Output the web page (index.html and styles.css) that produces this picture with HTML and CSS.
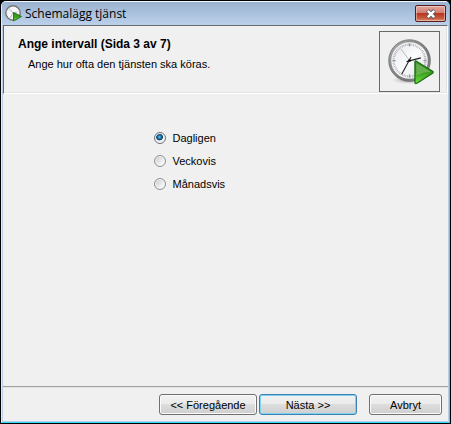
FILE: index.html
```html
<!DOCTYPE html>
<html lang="sv">
<head>
<meta charset="utf-8">
<title>Schemalägg tjänst</title>
<link rel="stylesheet" href="styles.css">
</head>
<body>
<svg class="defs" width="0" height="0" aria-hidden="true">
  <defs>
    <linearGradient id="rim" x1="0" y1="0" x2="1" y2="1">
      <stop offset="0" stop-color="#aaa"/><stop offset=".4" stop-color="#888"/><stop offset=".7" stop-color="#777"/><stop offset="1" stop-color="#999"/>
    </linearGradient>
    <linearGradient id="face" x1="0" y1="0" x2="1" y2="1">
      <stop offset="0" stop-color="#e2e4e8"/><stop offset=".5" stop-color="#fafbfc"/><stop offset="1" stop-color="#d9dce2"/>
    </linearGradient>
    <linearGradient id="play" x1="0" y1="0" x2="0" y2="1">
      <stop offset="0" stop-color="#3f8f2c"/><stop offset=".5" stop-color="#3a9a20"/><stop offset="1" stop-color="#6ee33c"/>
    </linearGradient>
    <radialGradient id="shade">
      <stop offset="0" stop-color="#777" stop-opacity=".7"/><stop offset="1" stop-color="#999" stop-opacity="0"/>
    </radialGradient>
  </defs>
</svg>
<form class="window">
  <header class="titlebar">
    <svg class="app-icon" viewBox="0 0 18 18" aria-hidden="true">
      <circle cx="8" cy="8" r="7.2" fill="url(#face)" stroke="#777" stroke-width="1.4"/>
      <path d="M4 3.5L8 8M8 8l-3 5M8 8l4-1" stroke="#aaa" stroke-width=".8" fill="none"/>
      <path d="M8.5 7.5L16.5 11.5L8.5 15.8Z" fill="url(#play)" stroke="#237a17" stroke-linejoin="round"/>
    </svg>
    <h1 class="title">Schemalägg tjänst</h1>
    <button class="close" type="button" aria-label="Stäng">
      <svg viewBox="0 0 12 10" aria-hidden="true">
        <path d="M2.5 1.5L9.5 8.5M9.5 1.5L2.5 8.5" stroke="#53565f" stroke-width="4"/>
        <path d="M2.8 1.8L9.2 8.2M9.2 1.8L2.8 8.2" stroke="#fff" stroke-width="2.4"/>
      </svg>
    </button>
  </header>
  <main class="client">
    <section class="banner">
      <div class="intro">
        <h2 class="heading">Ange intervall (Sida 3 av 7)</h2>
        <p class="hint">Ange hur ofta den tjänsten ska köras.</p>
      </div>
      <div class="picture">
        <svg viewBox="0 0 48 48" aria-hidden="true">
          <ellipse cx="21" cy="42" rx="17" ry="4" fill="url(#shade)"/>
          <circle cx="22" cy="22" r="20" fill="url(#face)" stroke="url(#rim)" stroke-width="2.6"/>
          <circle cx="22" cy="22" r="21.3" fill="none" stroke="#666" stroke-width=".7"/>
          <circle cx="22" cy="22" r="16.2" fill="none" stroke="#a4a7ad" stroke-width="2.2" stroke-dasharray=".7 .996"/>
          <path d="M22 4.7v3M22 36.3v3M4.7 22h3M36.3 22h3" stroke="#999" stroke-width="1.2"/>
          <path d="M13 10L22 22" stroke="#aaa" stroke-width=".8"/>
          <path d="M19 23.2L33.5 19.2" stroke="#222" stroke-width="1.3"/>
          <path d="M23.5 18.5L14 36" stroke="#222" stroke-width="1.1"/>
          <circle cx="22" cy="22" r="1.3" fill="#111"/>
          <path d="M27.5 23.5Q27.5 22 29 22.7L45.5 33Q46.8 34 45.5 35L29.5 45.2Q27.5 46 27.5 44.5Z" fill="url(#play)" stroke="#176d10" stroke-width="1.3"/>
          <path d="M28.9 24.5L43.5 33.5Q36 34 28.9 37Z" fill="#b7dca4" opacity=".35"/>
        </svg>
      </div>
    </section>
    <div class="choices" role="radiogroup" aria-label="Intervall">
      <label class="choice"><input type="radio" name="interval" checked>Dagligen</label>
      <label class="choice"><input type="radio" name="interval">Veckovis</label>
      <label class="choice"><input type="radio" name="interval">Månadsvis</label>
    </div>
    <footer class="actions">
      <button class="btn" type="button">&lt;&lt; Föregående</button>
      <button class="btn primary" type="button">Nästa &gt;&gt;</button>
      <button class="btn cancel" type="button">Avbryt</button>
    </footer>
  </main>
</form>
</body>
</html>
```
FILE: styles.css
```css
* {
  box-sizing: border-box;
}

body {
  margin: 0;
  padding: 1px;
  min-height: 100vh;
  display: flex;
  background: #000;
  color: #000;
  font: 11px/14px "Liberation Sans", sans-serif;
}

.defs {
  position: absolute;
}

.window {
  flex: 1;
  display: flex;
  flex-direction: column;
  border: 1px solid;
  border-color: #f4f7fb #2fd8f4 #2fd8f4 #e3edf8;
  border-radius: 5px 5px 0 0;
  background: #b9cfe9;
  overflow: hidden;
}

.titlebar {
  height: 23px;
  display: flex;
  align-items: center;
  gap: 2px;
  padding: 0 3px;
  background: linear-gradient(#9bb3d0, #bbd0ea);
}

.app-icon {
  width: 18px;
  height: 18px;
}

.title {
  flex: 1;
  margin: 0;
  font: 12px/16px "Open Sans", sans-serif;
}

.close {
  width: 31px;
  height: 17px;
  display: grid;
  place-items: center;
  padding: 0;
  border: 1px solid #571b1d;
  border-radius: 2px;
  background: linear-gradient(#e2a79c, #d17c6f 48%, #b9361f 50%, #c6593c 80%, #d98a6c);
  box-shadow: inset 0 0 0 1px #ffffff66;
}

.close svg {
  width: 12px;
  height: 10px;
}

.client {
  flex: 1;
  display: flex;
  flex-direction: column;
  margin: 0 1px 1px;
  background: #f0f0f0;
}

.banner {
  display: flex;
  justify-content: space-between;
  padding: 5px 7px 1px 14px;
  border: 1px solid;
  border-color: #696969 #fff #fff #696969;
  box-shadow: inset -1px -1px #e3e3e3;
}

.intro {
  padding-top: 6px;
}

.heading {
  margin: 0 0 6px;
  font: bold 12px/14px "Liberation Sans", sans-serif;
}

.hint {
  margin: 0 0 0 10px;
}

.picture {
  width: 61px;
  height: 61px;
  padding: 7px 6px 6px 8px;
  border: 1px solid #696969;
}

.picture svg {
  display: block;
  width: 47px;
  height: 47px;
}

.choices {
  flex: 1;
  display: flex;
  flex-direction: column;
  gap: 9px;
  padding-top: 37px;
  width: 144px;
  align-self: center;
}

.choice {
  display: flex;
  align-items: center;
  gap: 7px;
}

.choice input {
  appearance: none;
  width: 12px;
  height: 12px;
  margin: 0;
  border: 1px solid #8e8f8f;
  border-radius: 50%;
  background: linear-gradient(135deg, #c4c8cc, #f6f6f6 75%);
  box-shadow: inset 0 0 0 1px #f4f4f4;
}

.choice input:checked {
  border-color: #6c7074;
  background: radial-gradient(circle at 45% 40%, #7cd6f5 0, #1d7fb5 18%, #123e63 38%, #f0f3f5 46%);
}

.actions {
  display: flex;
  gap: 2px;
  justify-content: flex-end;
  padding: 7px 6px 6px;
  border-top: 1px solid #a0a0a0;
  box-shadow: inset 0 1px #e3e3e3;
}

.btn {
  width: 98px;
  height: 21px;
  padding: 0;
  border: 1px solid #707070;
  border-radius: 3px;
  background: linear-gradient(#f2f2f2, #ebebeb 48%, #dddddd 50%, #cfcfcf);
  box-shadow: inset 0 0 0 1px #fbfbfb;
  color: inherit;
  font: inherit;
}

.primary {
  border-color: #3c7fb1;
  box-shadow: inset 0 0 0 1px #7fd3f2;
}

.cancel {
  width: 73px;
  margin-left: 10px;
}
```
